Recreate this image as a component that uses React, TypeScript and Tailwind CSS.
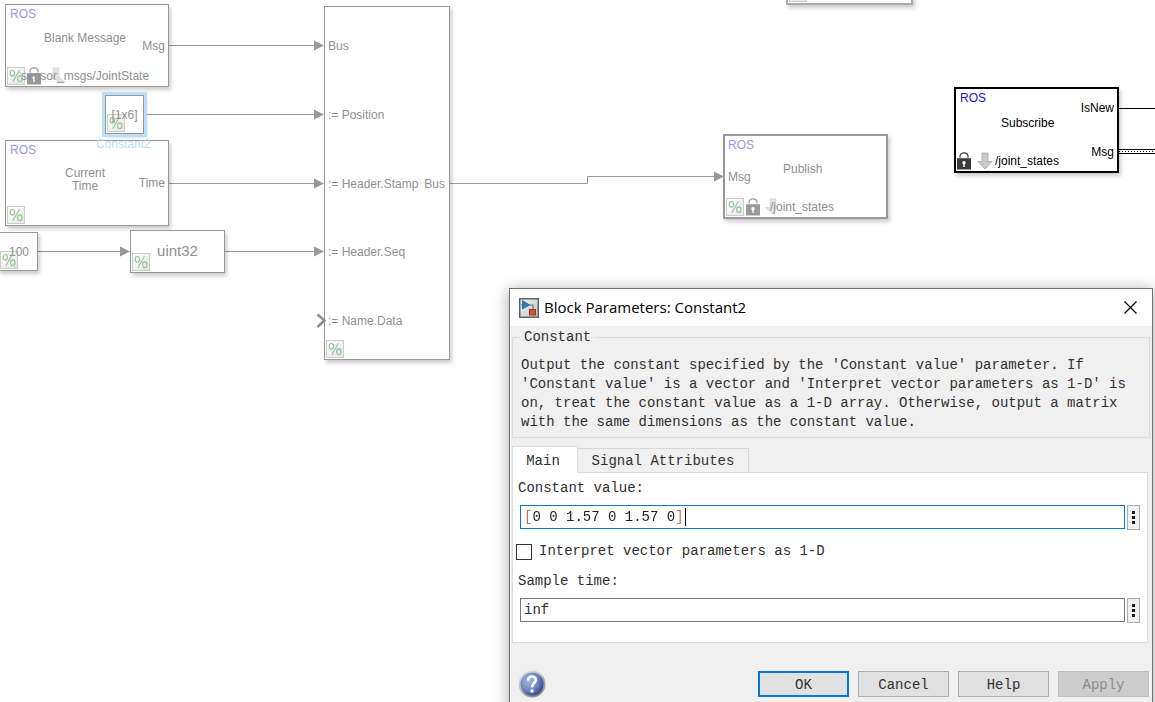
import type { ReactNode } from "react";

function PercentBadge() {
  return (
    <svg className="size-[18px]" viewBox="0 0 18 18" aria-hidden="true">
      <defs>
        <linearGradient id="badge" x1="0" y1="0" x2="1" y2="1">
          <stop offset="0" stopColor="#ffffff" />
          <stop offset="1" stopColor="#dcdcdc" />
        </linearGradient>
      </defs>
      <rect x="0.5" y="0.5" width="17" height="17" fill="url(#badge)" fillOpacity="0.8" stroke="#cdcdcd" />
      <g fill="none" stroke="#93c592" strokeWidth="1.1">
        <ellipse cx="5.4" cy="6.3" rx="2.2" ry="2.8" />
        <ellipse cx="12.8" cy="11.7" rx="2.2" ry="2.8" />
        <path d="M12.4 3.2 5.8 14.8" />
      </g>
    </svg>
  );
}

function Lock({ color }: { color: string }) {
  return (
    <svg className="h-[18px] w-[14px]" viewBox="0 0 14 18" aria-hidden="true">
      <path d="M3 5.4V4.4C3 -0.2 11 -0.2 11 4.4V5.4" fill="none" stroke={color} strokeWidth="1.3" />
      <rect x="0" y="6.2" width="14" height="11.3" fill={color} />
      <circle cx="7" cy="10.8" r="1.7" fill="#fff" />
      <path d="M6.3 11h1.4v4H6.3z" fill="#fff" />
    </svg>
  );
}

function DownArrow() {
  return (
    <svg className="h-[18px] w-4" viewBox="0 0 16 18" aria-hidden="true">
      <path d="M5 1h6v8.5h4.2L8 17 0.8 9.5H5z" fill="#c9c9c9" stroke="#a8a8a8" strokeWidth="0.8" />
    </svg>
  );
}

function FadedArrow({ head }: { head: "left" | "right" }) {
  return (
    <svg className="h-[18px] w-[14px]" viewBox="0 0 14 18" aria-hidden="true">
      {head === "left" ? (
        <path d="M5 1h6v8L8 16 0.5 9.5H5z" fill="#e2e2e2" stroke="#d2d2d2" strokeWidth="0.6" />
      ) : (
        <path d="M2 1h6v9l6 5H7L1 10h1z" fill="#e2e2e2" stroke="#d2d2d2" strokeWidth="0.6" />
      )}
    </svg>
  );
}

/* A block on the free canvas, with its status badges laid over the lower left corner. */
function Block({ className, badges, children }: { className: string; badges?: ReactNode; children?: ReactNode }) {
  return (
    <div className={`absolute whitespace-nowrap bg-white shadow-[2px_3px_4px_rgba(0,0,0,0.2)] ${className}`}>
      {badges && <div className="absolute bottom-px left-px flex gap-0.5">{badges}</div>}
      <div className="relative h-full">{children}</div>
    </div>
  );
}

function Wires() {
  return (
    <svg className="absolute inset-0 h-full w-full" aria-hidden="true">
      <g fill="none" stroke="#999999">
        <path d="M169 45.5H316M144 114.5H316M169 183.5H316M38 251.5H122M225 251.5H316" />
        <path d="M450 183.5H587.5V176.5H716" />
      </g>
      <path
        d="M314 40.5v10l10-5zM314 109.5v10l10-5zM314 178.5v10l10-5zM314 246.5v10l10-5zM120 246.5v10l10-5zM714 171.5v10l10-5z"
        fill="#999999"
      />
      <g stroke="#000" fill="none">
        <path d="M1118 108.5H2400M1118 149.5H2400M1118 153.5H2400" />
        <path d="M1119 151.5H2400" strokeDasharray="1 2" />
      </g>
    </svg>
  );
}

function Diagram() {
  return (
    <main className="absolute inset-0 text-[12px] leading-[14px] text-[#909090]">
      <Wires />

      <Block
        className="left-[5px] top-1 h-[83px] w-[164px] border border-[#999]"
        badges={
          <>
            <PercentBadge />
            <Lock color="#999999" />
            <span className="pl-2">
              <FadedArrow head="right" />
            </span>
          </>
        }
      >
        <div className="flex h-full flex-col pl-1 pr-[3px] pt-0.5">
          <p className="text-[#9797ea]">ROS</p>
          <div className="flex justify-between pl-[34px] pt-[10px]">
            <p>Blank Message</p>
            <p className="pt-2">Msg</p>
          </div>
          <p className="pl-[11px] pt-4">sensor_msgs/JointState</p>
        </div>
      </Block>

      <Block
        className="left-[5px] top-[140px] h-[86px] w-[164px] border border-[#999]"
        badges={<PercentBadge />}
      >
        <div className="flex flex-col gap-[10px] pl-1 pr-[3px] pt-0.5">
          <p className="text-[#9797ea]">ROS</p>
          <div className="flex items-center justify-between pl-[55px]">
            <p className="text-center leading-[13px]">
              Current
              <br />
              Time
            </p>
            <p className="pt-1.5">Time</p>
          </div>
        </div>
      </Block>

      <Block
        className="left-[105px] top-[95px] h-[39px] w-[39px] border border-[#999] ring-3 ring-[#bbdffa]"
        badges={<PercentBadge />}
      >
        <p className="flex h-full items-center justify-center">[1x6]</p>
      </Block>
      <p className="absolute left-[96px] top-[137px] z-10 text-[#b5dffc]">Constant2</p>

      <Block
        className="-left-0.5 top-[232px] h-[39px] w-10 border border-[#999]"
        badges={<PercentBadge />}
      >
        <p className="flex h-full items-center justify-end pr-2">100</p>
      </Block>

      <Block
        className="left-[130px] top-[230px] h-[43px] w-[95px] border border-[#999]"
        badges={<PercentBadge />}
      >
        <p className="flex h-full items-center justify-center pb-0.5 text-[15px]">uint32</p>
      </Block>

      <Block
        className="left-[324px] top-1.5 h-[354px] w-[126px] border border-[#999]"
        badges={<PercentBadge />}
      >
        <div className="flex h-full flex-col justify-between pb-[31px] pl-[3px] pr-1 pt-8">
          <p>Bus</p>
          <p>:= Position</p>
          <div className="flex justify-between">
            <p>:= Header.Stamp</p>
            <p>Bus</p>
          </div>
          <p>:= Header.Seq</p>
          <p>:= Name.Data</p>
        </div>
      </Block>
      <svg className="absolute left-[316px] top-[313px] h-4 w-[10px]" viewBox="0 0 10 16" aria-hidden="true">
        <path d="M1.5 1.5 8.5 7.5 1.5 14" fill="none" stroke="#8c8c8c" strokeWidth="2.4" />
      </svg>

      <Block
        className="left-[723px] top-[134px] h-[85px] w-[165px] border-2 border-[#999]"
        badges={
          <>
            <PercentBadge />
            <Lock color="#999999" />
            <span className="pl-[3px]">
              <FadedArrow head="left" />
            </span>
          </>
        }
      >
        <div className="flex h-full pl-[3px] pt-0.5">
          <div className="flex w-[42px] flex-col gap-[18px]">
            <p className="text-[#9797ea]">ROS</p>
            <p>Msg</p>
          </div>
          <div className="flex flex-col gap-6 pt-6">
            <p className="pl-[13px]">Publish</p>
            <p>/joint_states</p>
          </div>
        </div>
      </Block>

      <Block
        className="left-[954px] top-[87px] h-[86px] w-[165px] border-2 border-black text-black"
        badges={
          <>
            <Lock color="#3c3c3c" />
            <span className="pl-1">
              <DownArrow />
            </span>
          </>
        }
      >
        <div className="flex h-full justify-between pl-1 pr-[3px]">
          <div className="flex flex-col pt-0.5">
            <p className="text-[#1818b8]">ROS</p>
            <p className="pl-[41px] pt-[11px]">Subscribe</p>
            <p className="pl-[35px] pt-6">/joint_states</p>
          </div>
          <div className="flex flex-col gap-[30px] pt-3 text-right">
            <p>IsNew</p>
            <p>Msg</p>
          </div>
        </div>
      </Block>

      <Block
        className="-top-10 left-[786px] h-[45px] w-[127px] border-2 border-[#aaa]"
        badges={<PercentBadge />}
      />
    </main>
  );
}

function MoreButton({ label }: { label: string }) {
  return (
    <button
      type="button"
      aria-label={label}
      className="flex h-[25px] w-[13px] items-center justify-center border border-[#adadad] bg-[#f0f0f0]"
    >
      <svg className="h-[15px] w-[5px]" viewBox="0 0 5 15" aria-hidden="true">
        <path d="M1 1h3v3H1zM1 6h3v3H1zM1 11h3v3H1z" fill="#1c1c1c" />
      </svg>
    </button>
  );
}

function Dialog() {
  const action = "flex h-[26px] w-[91px] items-center justify-center pt-0.5";
  return (
    <section
      role="dialog"
      aria-labelledby="dialog-title"
      className="absolute left-[509px] right-0.5 top-[288px] z-20 border border-[#707070] bg-[#f0f0f0] pb-3 font-['Liberation_Mono',monospace] text-[14px] leading-[19px] text-[#303030] shadow-[0_2px_14px_rgba(0,0,0,0.35)]"
    >
      <header className="flex h-[37px] items-center bg-white pl-[9px] pr-[15px]">
        <svg className="size-5" viewBox="0 0 20 20" aria-hidden="true">
          <defs>
            <linearGradient id="app" x1="0" y1="0" x2="1" y2="1">
              <stop offset="0" stopColor="#f4f6f7" />
              <stop offset="1" stopColor="#bcc3c8" />
            </linearGradient>
          </defs>
          <rect x="0.75" y="0.75" width="18.5" height="18.5" fill="url(#app)" stroke="#5d6367" strokeWidth="1.5" />
          <path d="M2 7h2M10 7h4v5" fill="none" stroke="#6b7880" strokeWidth="1.2" />
          <path d="M3.5 2.5v8.5L10.5 7z" fill="#2580b8" stroke="#155c8c" strokeWidth="0.7" />
          <rect x="10.5" y="11.5" width="6" height="5.5" fill="#d9552b" stroke="#a5320f" />
        </svg>
        <h1
          id="dialog-title"
          className="ml-[5px] flex-1 pb-0.5 font-['Open_Sans','Noto_Sans',sans-serif] text-[15px] leading-5 text-black"
        >
          Block Parameters: Constant2
        </h1>
        <button type="button" aria-label="Close" className="size-[13px]">
          <svg className="size-[13px]" viewBox="0 0 13 13" aria-hidden="true">
            <path d="M0.5 0.5 12.5 12.5M12.5 0.5 0.5 12.5" stroke="#000" strokeWidth="1.2" />
          </svg>
        </button>
      </header>

      <fieldset className="mx-0.5 mt-0.5 border border-[#dcdcdc] px-2 pb-[5px]">
        <legend className="-ml-px px-1">Constant</legend>
        <p className="pt-[9px]">
          Output the constant specified by the 'Constant value' parameter. If
          <br />
          'Constant value' is a vector and 'Interpret vector parameters as 1-D' is
          <br />
          on, treat the constant value as a 1-D array. Otherwise, output a matrix
          <br />
          with the same dimensions as the constant value.
        </p>
      </fieldset>

      <div role="tablist" className="mx-0.5 mt-2 flex items-end">
        <button
          type="button"
          role="tab"
          aria-selected="true"
          className="relative z-10 -mb-px h-[27px] w-[66px] border border-b-0 border-[#dcdcdc] bg-white pr-1 pt-0.5"
        >
          Main
        </button>
        <button
          type="button"
          role="tab"
          aria-selected="false"
          className="-ml-px h-6 w-[172px] border border-b-0 border-[#d9d9d9] pt-0.5"
        >
          Signal Attributes
        </button>
      </div>

      <div role="tabpanel" className="ml-0.5 mr-1 border border-[#dcdcdc] bg-white pb-[19px] pl-[5px] pr-[7px] pt-1.5">
        <label htmlFor="constant-value" className="block">
          Constant value:
        </label>
        <div className="ml-0.5 mt-[7px] flex gap-0.5">
          <div className="relative h-6 flex-1 border border-[#0078d7] bg-white">
            <input
              id="constant-value"
              defaultValue="[0 0 1.57 0 1.57 0]"
              className="block h-full w-full bg-[linear-gradient(to_right,#b5705a_11px,#202020_11px,#202020_154px,#b5705a_154px)] bg-clip-text pl-[3px] text-transparent outline-none"
            />
            <span className="absolute left-[164px] top-0.5 h-[18px] w-px bg-black" />
          </div>
          <MoreButton label="Constant value actions" />
        </div>
        <label className="-ml-0.5 mt-3 flex items-center gap-[7px]">
          <input type="checkbox" className="size-4 appearance-none border border-[#303030] bg-white" />
          Interpret vector parameters as 1-D
        </label>
        <label htmlFor="sample-time" className="mt-[11px] block">
          Sample time:
        </label>
        <div className="ml-0.5 mt-[7px] flex gap-0.5">
          <input
            id="sample-time"
            defaultValue="inf"
            className="h-6 min-w-0 flex-1 border border-[#7a7a7a] bg-white pl-[3px] outline-none"
          />
          <MoreButton label="Sample time actions" />
        </div>
      </div>

      <footer className="mt-[27px] flex items-center gap-[9px] pl-2 pr-[3px]">
        <button type="button" aria-label="Context help" className="mr-auto size-7">
          <svg className="size-7" viewBox="0 0 28 28" aria-hidden="true">
            <defs>
              <radialGradient id="help" cx="0.35" cy="0.35" r="0.75">
                <stop offset="0" stopColor="#a9bbe4" />
                <stop offset="0.55" stopColor="#7189c4" />
                <stop offset="1" stopColor="#263f86" />
              </radialGradient>
              <linearGradient id="rim" x1="0" y1="0" x2="0.6" y2="1">
                <stop offset="0" stopColor="#f2f2f2" />
                <stop offset="1" stopColor="#8a8a8a" />
              </linearGradient>
            </defs>
            <circle cx="14" cy="14" r="13.5" fill="url(#rim)" />
            <circle cx="14" cy="14" r="11.5" fill="url(#help)" />
            <path
              d="M10 10.5C10 5.2 18.2 5.4 17.8 10.2C17.6 13 14 13.2 14 17.2"
              fill="none"
              stroke="#fff"
              strokeWidth="2.6"
            />
            <circle cx="14" cy="21" r="1.8" fill="#fff" />
          </svg>
        </button>
        <button type="button" className={`${action} border-2 border-[#0078d7] bg-[#e1e1e1]`}>
          OK
        </button>
        <button type="button" className={`${action} border border-[#adadad] bg-[#e1e1e1]`}>
          Cancel
        </button>
        <button type="button" className={`${action} border border-[#adadad] bg-[#e1e1e1]`}>
          Help
        </button>
        <button type="button" disabled className={`${action} border border-[#bfbfbf] bg-[#cccccc] text-[#8c8c8c]`}>
          Apply
        </button>
      </footer>
    </section>
  );
}

export default function App() {
  return (
    <div className="relative h-screen overflow-hidden bg-white font-['Liberation_Sans',Arial,sans-serif]">
      <Diagram />
      <Dialog />
    </div>
  );
}
